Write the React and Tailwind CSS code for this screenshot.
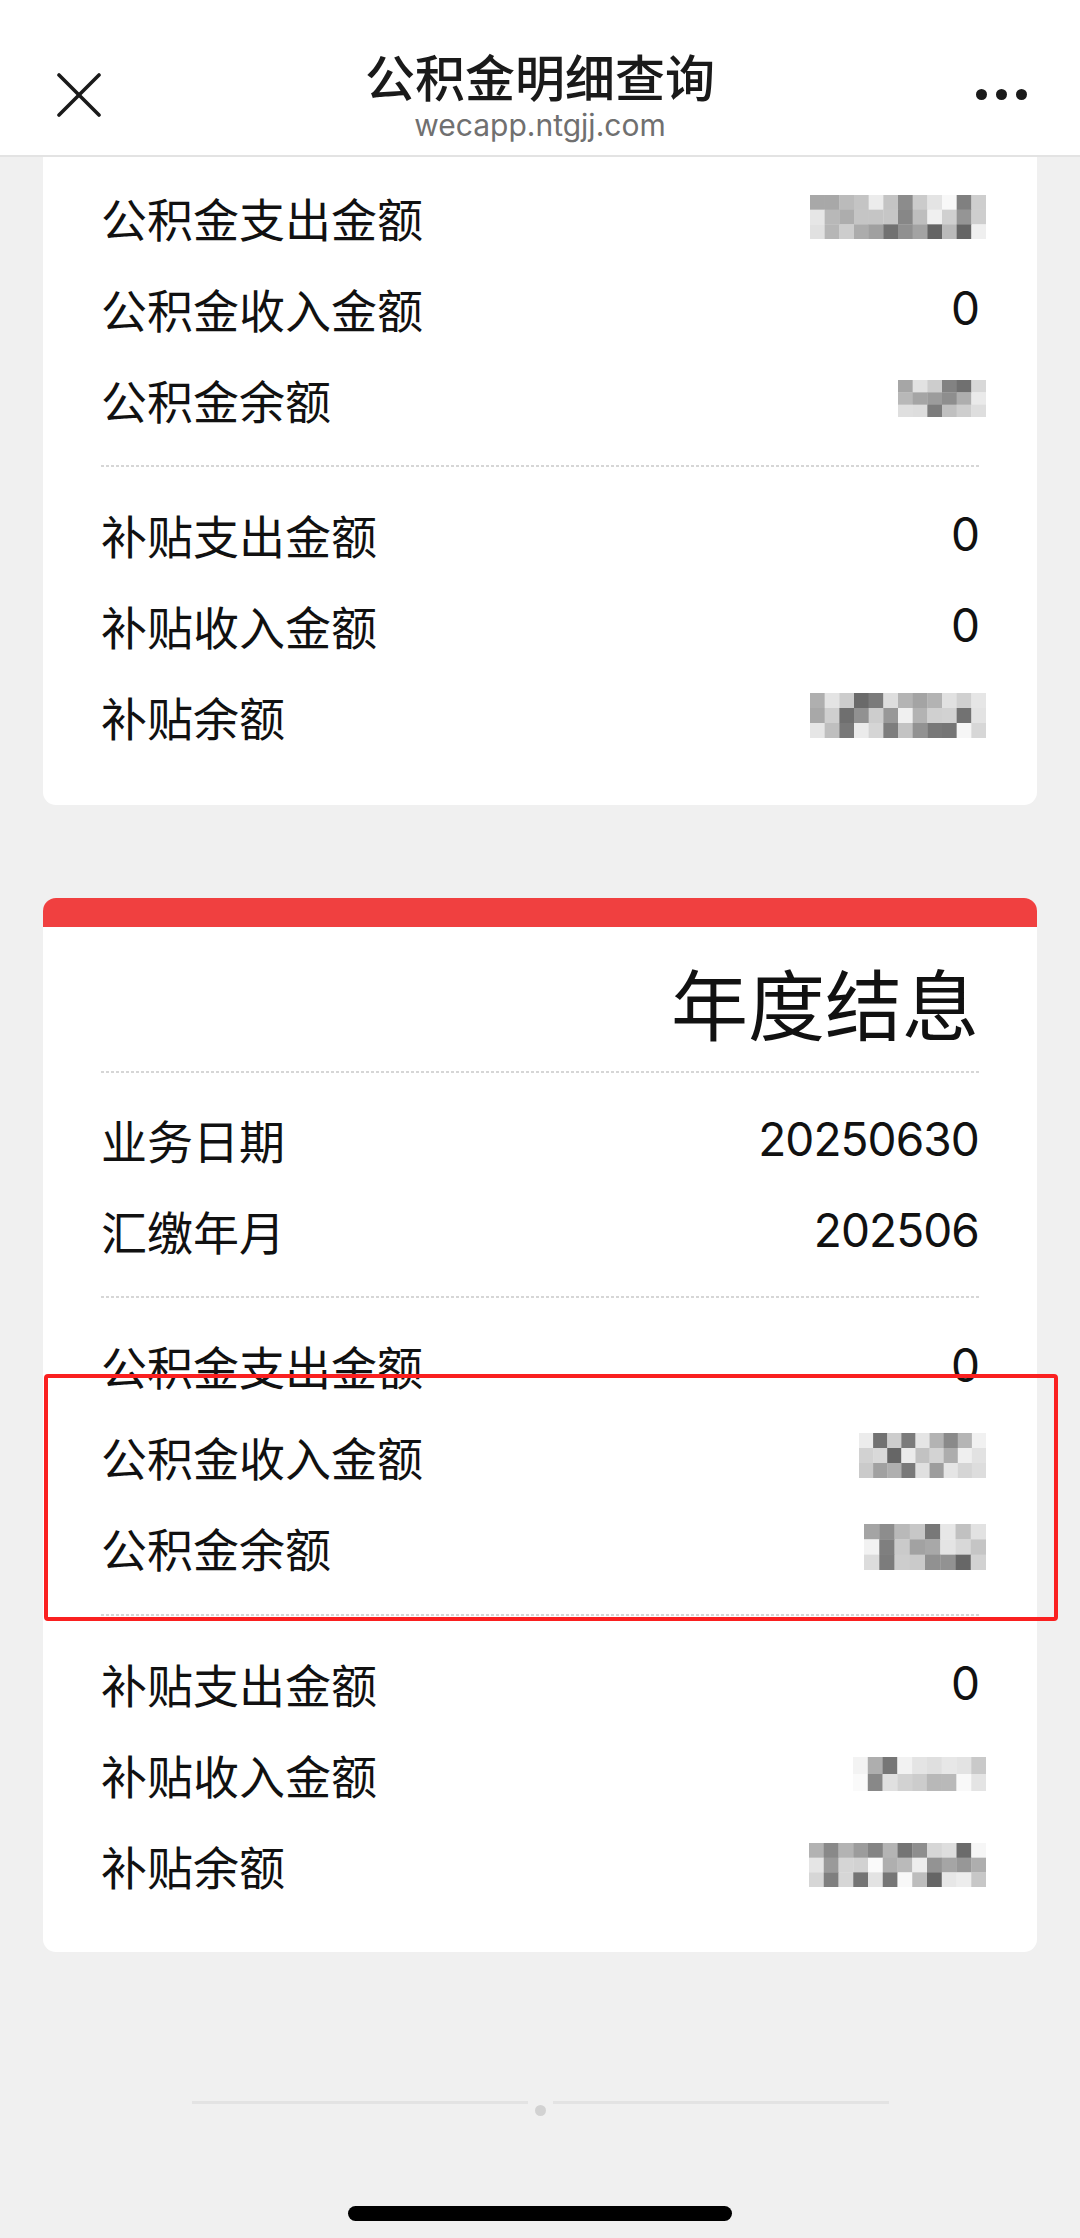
import React from 'react'

const CJK = "font-['Noto_Sans_CJK_SC',sans-serif]"
const NUM = "font-['Inter','Noto_Sans_CJK_SC',sans-serif]"

// pixelated (masked) amount, drawn as a grid of grey cells
function Mosaic({ w, h, cols, rows, seed }) {
  const cw = w / cols
  const ch = h / rows
  const cells = []
  for (let r = 0; r < rows; r++) {
    for (let c = 0; c < cols; c++) {
      const x = Math.sin(seed * 97.13 + r * 13.7 + c * 7.31) * 43758.5453
      let v = x - Math.floor(x)
      v = Math.pow(v, 1.1)
      const edge = c === 0 || c === cols - 1 ? 0.4 : 0
      const tone = Math.round(250 - v * (1 - edge) * 150)
      cells.push(
        <rect key={`${r}-${c}`} x={c * cw} y={r * ch} width={cw + 0.3} height={ch + 0.3}
              fill={`rgb(${tone},${tone},${tone})`} />
      )
    }
  }
  return (
    <svg width={w} height={h} viewBox={`0 0 ${w} ${h}`} className="-mr-[7px] block shrink-0">
      {cells}
    </svg>
  )
}

function Num({ children }) {
  return <span className={`${NUM} text-[46px] leading-none tracking-[-0.9px] text-[#111]`}>{children}</span>
}

function Row({ label, value }) {
  return (
    <div className="flex h-[91px] items-center justify-between">
      <span className={`${CJK} text-[46px] leading-none text-[#111]`}>{label}</span>
      {value}
    </div>
  )
}

function Divider({ className = '' }) {
  return (
    <div className={`h-[2px] bg-[linear-gradient(to_right,#d6d6d6_60%,transparent_60%)] bg-[length:5px_2px] bg-repeat-x ${className}`} />
  )
}

function XIcon() {
  return (
    <svg width="44" height="44" viewBox="0 0 44 44" fill="none" stroke="#1a1a1a" strokeWidth="3.6" strokeLinecap="round">
      <path d="M2 2 L42 42" />
      <path d="M42 2 L2 42" />
    </svg>
  )
}

function Dots() {
  return (
    <svg width="51" height="11" viewBox="0 0 51 11" fill="#1a1a1a">
      <circle cx="5.5" cy="5.5" r="5.5" />
      <circle cx="25.5" cy="5.5" r="5.5" />
      <circle cx="45.5" cy="5.5" r="5.5" />
    </svg>
  )
}

export default function App() {
  return (
    <div className="relative min-h-[2238px] w-[1080px] overflow-hidden bg-[#f0f0f0]">
      <header className="flex h-[157px] border-b-2 border-[#e3e3e3] bg-white">
        <div className="w-[200px] pl-[57px] pt-[73px]">
          <XIcon />
        </div>
        <div className="flex flex-1 flex-col items-center pt-[48px]">
          <div className={`${CJK} text-[50px] font-medium leading-[54px] text-[#1a1a1a]`}>公积金明细查询</div>
          <div className="mt-[5px] font-['Inter',sans-serif] text-[30px] leading-[36px] text-[#707070]">wecapp.ntgjj.com</div>
        </div>
        <div className="flex w-[200px] justify-end pr-[53px] pt-[89px]">
          <Dots />
        </div>
      </header>

      <div className="mx-[43px] rounded-b-[13px] bg-white px-[58px] pb-[44px] pt-[14px]">
        <Row label="公积金支出金额" value={<Mosaic w={176} h={44} cols={12} rows={3} seed={1} />} />
        <Row label="公积金收入金额" value={<Num>0</Num>} />
        <Row label="公积金余额" value={<Mosaic w={88} h={37} cols={6} rows={3} seed={2} />} />
        <Divider className="my-[21px]" />
        <Row label="补贴支出金额" value={<Num>0</Num>} />
        <Row label="补贴收入金额" value={<Num>0</Num>} />
        <Row label="补贴余额" value={<Mosaic w={176} h={45} cols={12} rows={3} seed={3} />} />
      </div>

      <div className="mx-[43px] mt-[93px] overflow-hidden rounded-[13px] bg-white">
        <div className="h-[29px] bg-[#f04040]" />
        <div className="px-[58px] pb-[42px] pt-[24px]">
          <div className={`${CJK} flex h-[100px] items-center justify-end text-[77px] leading-none text-[#111]`}>年度结息</div>
          <Divider className="mb-[20px] mt-[20px]" />
          <Row label="业务日期" value={<Num>20250630</Num>} />
          <Row label="汇缴年月" value={<Num>202506</Num>} />
          <Divider className="my-[21px]" />
          <Row label="公积金支出金额" value={<Num>0</Num>} />
          <Row label="公积金收入金额" value={<Mosaic w={127} h={45} cols={9} rows={3} seed={4} />} />
          <Row label="公积金余额" value={<Mosaic w={122} h={46} cols={8} rows={3} seed={5} />} />
          <Divider className="mb-[21px] mt-[22px]" />
          <Row label="补贴支出金额" value={<Num>0</Num>} />
          <Row label="补贴收入金额" value={<Mosaic w={133} h={34} cols={9} rows={2} seed={6} />} />
          <Row label="补贴余额" value={<Mosaic w={177} h={44} cols={12} rows={3} seed={7} />} />
        </div>
      </div>

      <div className="mt-[149px] flex items-start justify-center">
        <div className="h-[3px] w-[336px] bg-[#e3e3e3]" />
        <div className="mx-[7px] mt-[4px] h-[11px] w-[11px] rounded-full bg-[#d2d2d2]" />
        <div className="h-[3px] w-[336px] bg-[#e3e3e3]" />
      </div>
      <div className="mx-auto mt-[90px] h-[15px] w-[384px] rounded-full bg-black" />

      {/* annotation box drawn over the screenshot */}
      <div className="pointer-events-none absolute left-[44px] top-[1374px] h-[247px] w-[1014px] rounded-[4px] border-[4px] border-[#fa2020]" />
    </div>
  )
}
